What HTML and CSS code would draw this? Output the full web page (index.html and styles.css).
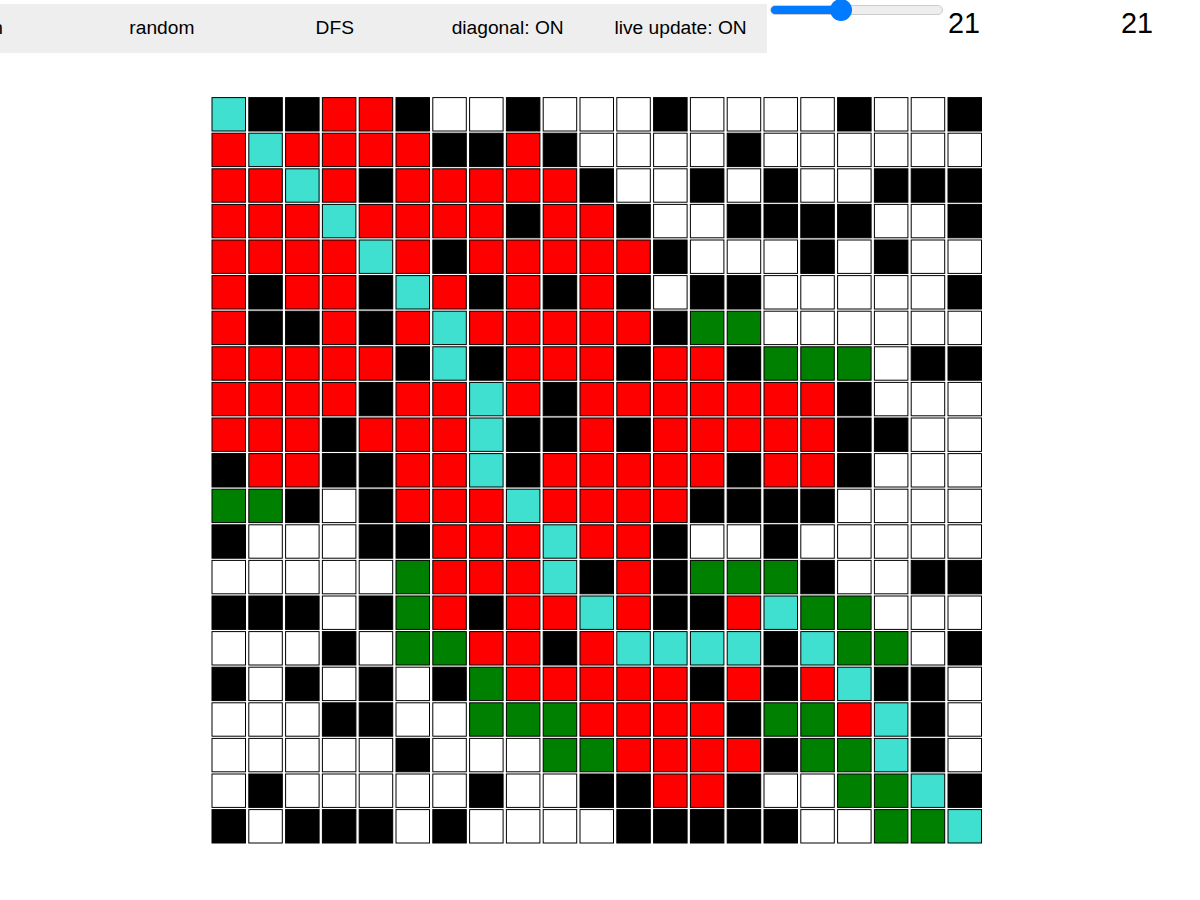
FILE: index.html
```html
<!DOCTYPE html>
<html lang="en">
<head>
<meta charset="UTF-8">
<meta name="viewport" content="width=device-width, initial-scale=1.0">
<title>Pathfinding</title>
<link rel="stylesheet" href="styles.css">
</head>
<body>
    <div class="top">
        <div class="toolbar">
            <button type="button">run</button>
            <button type="button">random</button>
            <button type="button">DFS</button>
            <button type="button">diagonal: ON</button>
            <button type="button">live update: ON</button>
        </div>
        <input type="range" class="slider" min="5" max="45" value="21">
        <span class="count">21</span>
        <span class="count">21</span>
    </div>

    <svg class="grid" id="grid" width="772" height="748" viewBox="0 0 772 748"></svg>

    <script src="grid.js"></script>
</body>
</html>
```

FILE: styles.css
```css
html, body {
    overflow: hidden;
}

body {
    font-family: "Liberation Sans", Arial, sans-serif;
    background-color: #fff;
    margin: 0;
    padding: 0;
}

.top {
    display: flex;
    align-items: flex-start;
    height: 97px;
    margin-left: -97.5px;
}

.toolbar {
    display: flex;
    flex-shrink: 0;
    width: 864.5px;
    margin-top: 4px;
    background-color: #eee;
}

.toolbar button {
    flex: 1;
    height: 49px;
    padding: 0 0 2px;
    border: none;
    background: none;
    color: #000;
    font-family: "Liberation Sans", Arial, sans-serif;
    font-size: 19.2px;
    cursor: pointer;
}

.slider {
    -webkit-appearance: none;
    appearance: none;
    flex-shrink: 0;
    width: 172.5px;
    height: 22px;
    margin: -1px 5.5px 0 3px;
    background: none;
}

.slider::-webkit-slider-runnable-track {
    height: 10px;
    box-sizing: border-box;
    border: 1px solid #ccc;
    border-radius: 5px;
    background: linear-gradient(to right, #007bff 40%, #eee 40%);
}

.slider::-webkit-slider-thumb {
    -webkit-appearance: none;
    width: 22px;
    height: 22px;
    margin-top: -7px;
    border-radius: 50%;
    background-color: #007bff;
}

.count {
    flex-shrink: 0;
    width: 173px;
    margin-top: 7px;
    font-size: 28.8px;
    line-height: 33px;
    color: #000;
}

.grid {
    display: block;
    margin-left: 211px;
}

.cell {
    stroke: #000;
    stroke-width: 1;
}

.white { fill: #fff; }
.black { fill: #000; }
.red { fill: #f00; }
.green { fill: #008000; }
.path { fill: #40e0d0; }
```

FILE: grid.js
```js
// one string per row
var rows = [
    "TKKRRKWWKWWWKWWWWKWWK",
    "RTRRRRKKRKWWWWKWWWWWW",
    "RRTRKRRRRRKWWKWKWWKKK",
    "RRRTRRRRKRRKWWKKKKWWK",
    "RRRRTRKRRRRRKWWWKWKWW",
    "RKRRKTRKRKRKWKKWWWWWK",
    "RKKRKRTRRRRRKGGWWWWWW",
    "RRRRRKTKRRRKRRKGGGWKK",
    "RRRRKRRTRKRRRRRRRKWWW",
    "RRRKRRRTKKRKRRRRRKKWW",
    "KRRKKRRTKRRRRRKRRKWWW",
    "GGKWKRRRTRRRRKKKKWWWW",
    "KWWWKKRRRTRRKWWKWWWWW",
    "WWWWWGRRRTKRKGGGKWWKK",
    "KKKWKGRKRRTRKKRTGGWWW",
    "WWWKWGGRRKRTTTTKTGGWK",
    "KWKWKWKGRRRRRKRKRTKKW",
    "WWWKKWWGGGRRRRKGGRTKW",
    "WWWWWKWWWGGRRRRKGGTKW",
    "WKWWWWWKWWKKRRKWWGGTK",
    "KWKKKWKWWWWKKKKKWWGGT"
];

var names = { W: "white", K: "black", R: "red", G: "green", T: "path" };
var grid = document.getElementById("grid");

rows.forEach(function(row, y) {
    row.split("").forEach(function(c, x) {
        var rect = document.createElementNS("http://www.w3.org/2000/svg", "rect");
        rect.setAttribute("class", "cell " + names[c]);
        rect.setAttribute("x", 1 + x * 36.8);
        rect.setAttribute("y", 0.6 + y * 35.6);
        rect.setAttribute("width", 33.5);
        rect.setAttribute("height", 33.4);
        grid.appendChild(rect);
    });
});
```
